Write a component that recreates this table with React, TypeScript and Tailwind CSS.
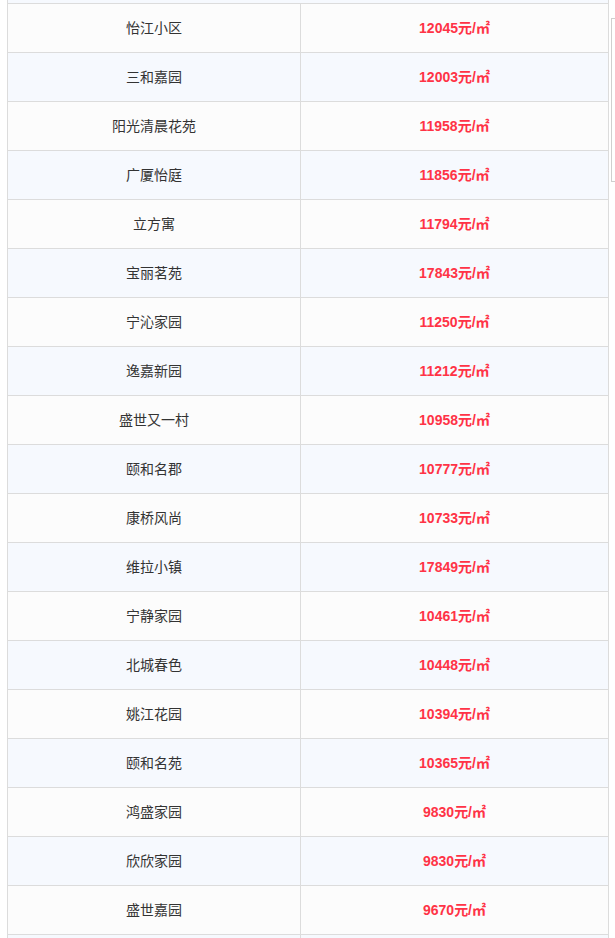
const rows: [string, string][] = [
  ['怡江小区', '12045'],
  ['三和嘉园', '12003'],
  ['阳光清晨花苑', '11958'],
  ['广厦怡庭', '11856'],
  ['立方寓', '11794'],
  ['宝丽茗苑', '17843'],
  ['宁沁家园', '11250'],
  ['逸嘉新园', '11212'],
  ['盛世又一村', '10958'],
  ['颐和名郡', '10777'],
  ['康桥风尚', '10733'],
  ['维拉小镇', '17849'],
  ['宁静家园', '10461'],
  ['北城春色', '10448'],
  ['姚江花园', '10394'],
  ['颐和名苑', '10365'],
  ['鸿盛家园', '9830'],
  ['欣欣家园', '9830'],
  ['盛世嘉园', '9670'],
  ['', ''],
];

export default function App() {
  return (
    <div
      className="relative h-[938px] overflow-hidden bg-white text-sm"
      style={{ fontFamily: '"Liberation Sans", "Noto Sans CJK SC", sans-serif' }}
    >
      <div className="ml-[7px] w-[602px] border-x border-[#dcdcdc]">
        <div className="h-[4px] border-b border-[#dcdcdc] bg-[#f6f9fe]" />
        {rows.map(([name, price], i) => (
          <div
            key={i}
            className={
              'grid h-[49px] grid-cols-[293px_1fr] border-b border-[#dcdcdc] ' +
              (i % 2 === 0 ? 'bg-[#fcfcfc]' : 'bg-[#f6f9fe]')
            }
          >
            <div className="flex items-center justify-center border-r border-[#dcdcdc] text-[#333]">
              {name}
            </div>
            <div className="flex items-center justify-center font-bold text-[#ff3346]">
              {price && <span>{price}元/㎡</span>}
            </div>
          </div>
        ))}
      </div>
      <div className="absolute left-[611px] top-[18px] h-[164px] w-[12px] border border-[#cfcfcf] bg-white" />
    </div>
  );
}
